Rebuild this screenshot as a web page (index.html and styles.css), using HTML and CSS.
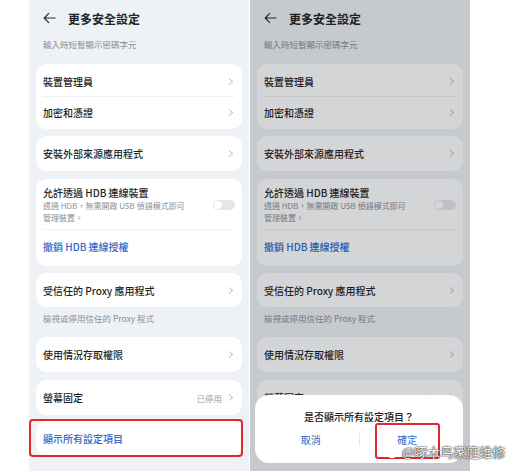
FILE: index.html
```html
<!DOCTYPE html>
<html lang="zh-Hant">
<head>
    <meta charset="UTF-8">
    <meta name="viewport" content="width=device-width, initial-scale=1.0">
    <title>更多安全設定</title>
    <link rel="stylesheet" href="styles.css">
</head>
<body>
    <div class="screens">
        <!-- before -->
        <div class="phone">
            <div class="topbar">
                <svg class="back" width="13" height="12" viewBox="0 0 13 12"><path d="M12.5 6H1.2M6 1.2L1.2 6L6 10.8" fill="none" stroke="#2b2b2b" stroke-width="1.2"/></svg>
                <span class="title">更多安全設定</span>
            </div>
            <div class="hint top">輸入時短暫顯示密碼字元</div>

            <div class="card c1">
                <div class="row"><span>裝置管理員</span><i class="chev"></i></div>
                <div class="line"></div>
                <div class="row"><span>加密和憑證</span><i class="chev"></i></div>
            </div>
            <div class="card">
                <div class="row tall"><span>安裝外部來源應用程式</span><i class="chev"></i></div>
            </div>
            <div class="card hdb">
                <div class="hdb-top">
                    <div>
                        <div class="hdb-title">允許透過 HDB 連線裝置</div>
                        <div class="hdb-desc">透過 HDB，無需開啟 USB 偵錯模式即可<br>管理裝置。</div>
                    </div>
                    <span class="switch"></span>
                </div>
                <div class="line"></div>
                <div class="row link-row"><span class="link">撤銷 HDB 連線授權</span></div>
            </div>
            <div class="card before-cap">
                <div class="row proxy"><span>受信任的 Proxy 應用程式</span><i class="chev"></i></div>
            </div>
            <div class="hint cap">檢視或停用信任的 Proxy 程式</div>
            <div class="card">
                <div class="row tall"><span>使用情況存取權限</span><i class="chev"></i></div>
            </div>
            <div class="card pin">
                <div class="row tall"><span>螢幕固定</span><span class="value">已停用<i class="chev"></i></span></div>
            </div>
            <div class="card">
                <div class="row tall"><span class="link">顯示所有設定項目</span></div>
                <div class="callout"></div>
            </div>
        </div>

        <!-- after tapping -->
        <div class="phone">
            <div class="topbar">
                <svg class="back" width="13" height="12" viewBox="0 0 13 12"><path d="M12.5 6H1.2M6 1.2L1.2 6L6 10.8" fill="none" stroke="#2b2b2b" stroke-width="1.2"/></svg>
                <span class="title">更多安全設定</span>
            </div>
            <div class="hint top">輸入時短暫顯示密碼字元</div>

            <div class="card c1">
                <div class="row"><span>裝置管理員</span><i class="chev"></i></div>
                <div class="line"></div>
                <div class="row"><span>加密和憑證</span><i class="chev"></i></div>
            </div>
            <div class="card">
                <div class="row tall"><span>安裝外部來源應用程式</span><i class="chev"></i></div>
            </div>
            <div class="card hdb">
                <div class="hdb-top">
                    <div>
                        <div class="hdb-title">允許透過 HDB 連線裝置</div>
                        <div class="hdb-desc">透過 HDB，無需開啟 USB 偵錯模式即可<br>管理裝置。</div>
                    </div>
                    <span class="switch"></span>
                </div>
                <div class="line"></div>
                <div class="row link-row"><span class="link">撤銷 HDB 連線授權</span></div>
            </div>
            <div class="card before-cap">
                <div class="row proxy"><span>受信任的 Proxy 應用程式</span><i class="chev"></i></div>
            </div>
            <div class="hint cap">檢視或停用信任的 Proxy 程式</div>
            <div class="card">
                <div class="row tall"><span>使用情況存取權限</span><i class="chev"></i></div>
            </div>
            <div class="card pin">
                <div class="row tall"><span>螢幕固定</span><span class="value">已停用<i class="chev"></i></span></div>
            </div>
            <div class="card">
                <div class="row tall"><span class="link">顯示所有設定項目</span></div>
            </div>

            <div class="scrim"></div>
            <div class="dialog">
                <div class="dialog-title">是否顯示所有設定項目？</div>
                <div class="dialog-btns">
                    <span class="btn">取消</span>
                    <span class="sep"></span>
                    <span class="btn">確定</span>
                </div>
                <div class="callout ok"></div>
            </div>
        </div>

        <div class="watermark">
            <svg width="14" height="12" viewBox="0 0 14 12"><ellipse cx="6" cy="7.5" rx="5.5" ry="4" fill="none" stroke="#fff" stroke-width="1.2"/><circle cx="5.5" cy="8" r="1.6" fill="#fff"/><path d="M10 1.5a3 3 0 0 1 3 3" fill="none" stroke="#fff" stroke-width="1"/></svg>
            <span>@啄木鸟家庭维修</span>
        </div>
    </div>
</body>
</html>
```

FILE: styles.css
```css
body {
    margin: 0;
    background: #fff;
    font-family: "Noto Sans CJK TC", "Noto Sans", sans-serif;
    color: #1f1f1f;
}

.screens {
    position: relative;
    display: flex;
    gap: 1px;
    padding-left: 29px;
    height: 471px;
    overflow: hidden;
}

.phone {
    position: relative;
    width: 220px;
    height: 471px;
    padding: 0 7px;
    box-sizing: border-box;
    background: #eef1f5;
    overflow: hidden;
}

.topbar {
    display: flex;
    align-items: center;
    height: 20px;
    margin-top: 8px;
    padding-left: 7px;
}

.title {
    margin-left: 12px;
    font-size: 12px;
    font-weight: 700;
    color: #222;
}

.hint {
    padding-left: 7px;
    font-size: 8.5px;
    line-height: 10px;
    color: #8c9095;
}

.hint.top {
    margin: 11px 0 15px;
}

.hint.cap {
    margin: 0 0 14px;
}

.card {
    position: relative;
    background: #fff;
    border-radius: 10px;
    margin-bottom: 7px;
}

.card.c1 {
    padding: 2px 0;
}

.card.hdb {
    margin-top: 8px;
    padding: 7px 0 3px;
}

.card.before-cap {
    margin-bottom: 6px;
}

.card.pin {
    margin-top: 8px;
    margin-bottom: 6px;
}

.row {
    display: flex;
    align-items: center;
    justify-content: space-between;
    height: 30px;
    padding: 0 9px 0 7px;
    font-size: 10px;
    font-weight: 500;
}

.row.tall {
    height: 35px;
}

.row.proxy {
    height: 34px;
}

.line {
    height: 1px;
    margin: 0 7px;
    background: #f0f1f3;
}

.chev {
    display: inline-block;
    width: 4px;
    height: 4px;
    border-top: 1px solid #c4c6c9;
    border-right: 1px solid #c4c6c9;
    transform: rotate(45deg);
    margin-right: 1px;
}

.value {
    display: flex;
    align-items: center;
    gap: 5px;
    font-size: 8.5px;
    font-weight: 400;
    color: #9a9da1;
}

.link {
    color: #2f67c9;
}

.hdb-top {
    display: flex;
    align-items: flex-start;
    justify-content: space-between;
    padding: 0 7px 5px;
}

.hdb-title {
    font-size: 10px;
    font-weight: 500;
    line-height: 14px;
}

.hdb-desc {
    font-size: 8px;
    line-height: 12px;
    color: #8c9095;
}

.switch {
    position: relative;
    width: 22px;
    height: 10px;
    margin-top: 14px;
    border-radius: 5px;
    background: #e4e6e9;
}

.switch::after {
    content: "";
    position: absolute;
    left: 1px;
    top: 1px;
    width: 8px;
    height: 8px;
    border-radius: 50%;
    background: #fff;
}

.link-row {
    height: 33px;
}

.callout {
    position: absolute;
    top: -2px;
    right: -1px;
    bottom: -1px;
    left: -7px;
    border: 2px solid #e3262b;
    border-radius: 4px;
}

.scrim {
    position: absolute;
    inset: 0;
    background: rgba(18, 24, 32, 0.18);
}

.dialog {
    position: absolute;
    left: 5px;
    top: 395px;
    width: 208px;
    height: 68px;
    padding-top: 15px;
    box-sizing: border-box;
    background: #fff;
    border-radius: 14px;
    text-align: center;
}

.dialog-title {
    font-size: 10px;
    font-weight: 500;
    line-height: 14px;
    color: #222;
}

.dialog-btns {
    display: flex;
    align-items: center;
    height: 22px;
    margin-top: 4px;
    padding: 0 8px;
}

.btn {
    flex: 1;
    font-size: 10px;
    color: #2f67c9;
}

.sep {
    width: 1px;
    height: 14px;
    background: #e6e7e9;
}

.callout.ok {
    top: 28px;
    left: 120px;
    right: auto;
    bottom: auto;
    width: 65px;
    height: 36px;
    box-sizing: border-box;
    border-radius: 3px;
}

.watermark {
    position: absolute;
    left: 386px;
    top: 444px;
    display: flex;
    align-items: center;
    gap: 2px;
    font-size: 13px;
    line-height: 16px;
    color: #f4f4f4;
    text-shadow: 0 0 1px #333, 0 0 1px #333, 0 0 2px #555;
}
```
